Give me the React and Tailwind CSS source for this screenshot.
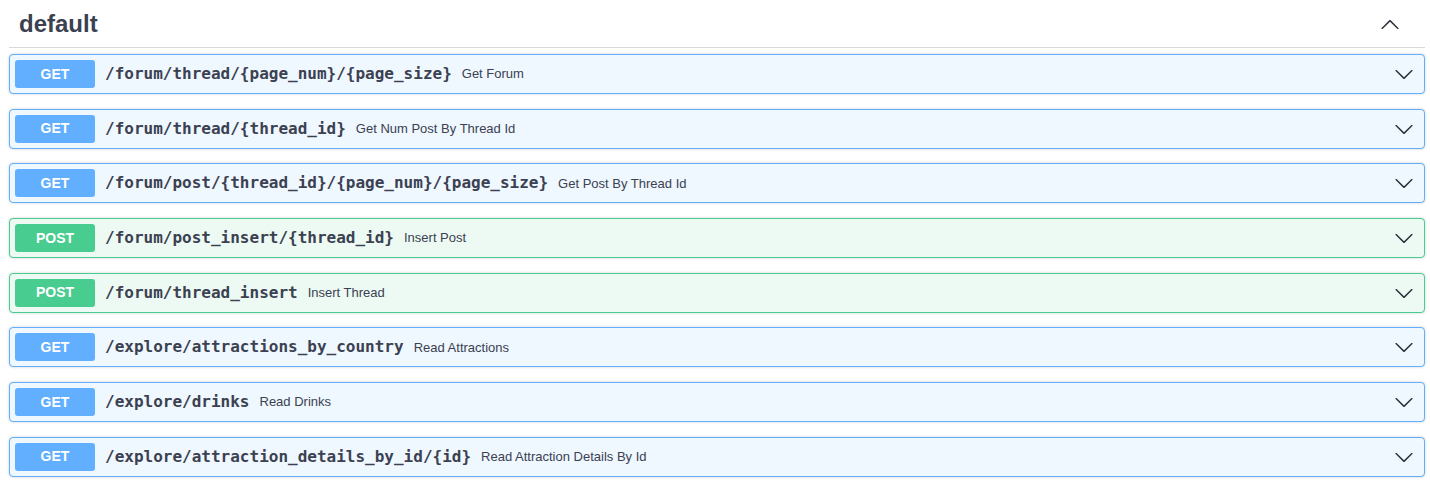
const ops = [
  { method: "GET", path: "/forum/thread/{page_num}/{page_size}", summary: "Get Forum" },
  { method: "GET", path: "/forum/thread/{thread_id}", summary: "Get Num Post By Thread Id" },
  { method: "GET", path: "/forum/post/{thread_id}/{page_num}/{page_size}", summary: "Get Post By Thread Id" },
  { method: "POST", path: "/forum/post_insert/{thread_id}", summary: "Insert Post" },
  { method: "POST", path: "/forum/thread_insert", summary: "Insert Thread" },
  { method: "GET", path: "/explore/attractions_by_country", summary: "Read Attractions" },
  { method: "GET", path: "/explore/drinks", summary: "Read Drinks" },
  { method: "GET", path: "/explore/attraction_details_by_id/{id}", summary: "Read Attraction Details By Id" },
];

const ArrowDown = () => (
  <svg width="20" height="20" viewBox="0 0 20 20" className="fill-[#2b2f38]">
    <path d="M17.418 6.109c.272-.268.709-.268.979 0s.271.701 0 .969l-7.908 7.83c-.27.268-.707.268-.979 0l-7.908-7.83c-.27-.268-.27-.701 0-.969.271-.268.709-.268.979 0L10 13.25l7.418-7.141z" />
  </svg>
);

const ArrowUp = () => (
  <svg width="20" height="20" viewBox="0 0 20 20" className="fill-[#2b2f38]">
    <path d="M17.418 14.908c.272.268.709.268.979 0s.271-.701 0-.969l-7.908-7.83c-.27-.268-.707-.268-.979 0l-7.908 7.83c-.27.268-.27.701 0 .969.271.268.709.268.979 0L10 7.767l7.418 7.141z" />
  </svg>
);

const OpBlock = ({ op }) => {
  const isGet = op.method === "GET";
  return (
    <div
      className={`${isGet ? "border-[#61affe] bg-[#eff7ff]" : "border-[#49cc90] bg-[#edfaf4]"} mb-[14.7px] flex h-[40px] items-center rounded-[4px] border px-[5px] shadow-[0_0_3px_rgba(0,0,0,0.19)]`}
    >
      <span
        className={`${isGet ? "bg-[#61affe]" : "bg-[#49cc90]"} flex h-[28px] w-[80px] items-center justify-center rounded-[3px] font-['Liberation_Sans',sans-serif] text-[14px] font-bold text-white`}
      >
        {op.method}
      </span>
      <span className="pl-[10px] font-['DejaVu_Sans_Mono',monospace] text-[16px] font-bold text-[#3b4151]">
        {op.path}
      </span>
      <span className="flex-1 pl-[10px] font-['Liberation_Sans',sans-serif] text-[13px] text-[#3b4151]">
        {op.summary}
      </span>
      <span className="pl-[9px] pr-[5px]">
        <ArrowDown />
      </span>
    </div>
  );
};

export default function App() {
  return (
    <div className="h-[484px] w-[1430px] overflow-hidden bg-white">
      <div className="ml-[9px] mr-[5px]">
        <h3 className="flex h-[48px] items-center justify-between border-b border-[#d8d9dc] pl-[10px] pr-[25px]">
          <span className="font-['Liberation_Sans',sans-serif] text-[24px] font-bold text-[#3b4151]">default</span>
          <ArrowUp />
        </h3>
        <div className="pt-[6px]">
          {ops.map((op, i) => (
            <OpBlock key={i} op={op} />
          ))}
        </div>
      </div>
    </div>
  );
}
